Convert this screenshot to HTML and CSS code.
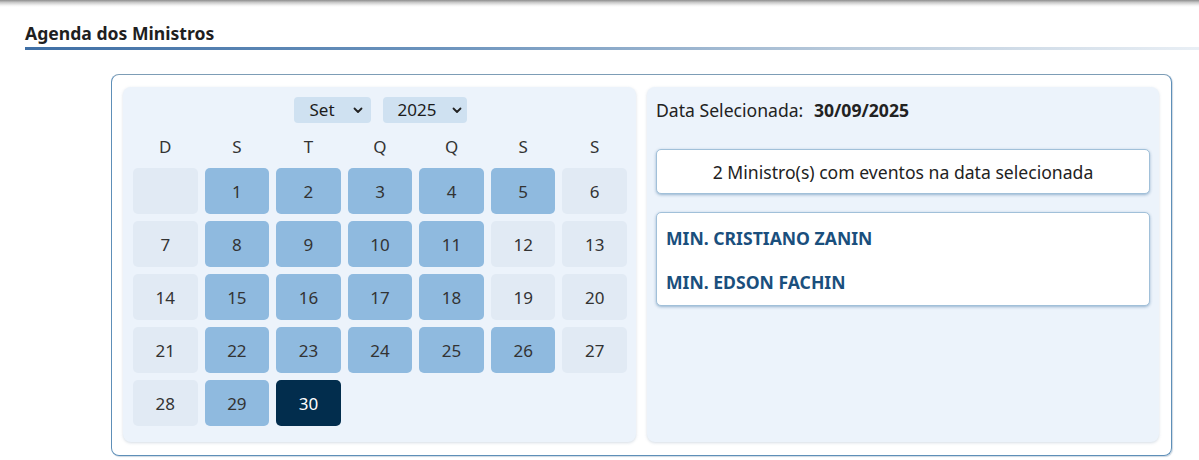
FILE: index.html
```html
<!DOCTYPE html>
<html lang="pt-BR">
<head>
<meta charset="utf-8">
<title>Agenda dos Ministros</title>
<link rel="stylesheet" href="styles.css">
</head>
<body>
<div class="topshadow"></div>
<header class="page-head">
  <h1 class="page-title">Agenda dos Ministros</h1>
</header>
<main class="agenda">
  <section class="panel calendar">
    <div class="pickers">
      <div class="picker picker-month"><span>Set</span><svg class="chev" width="10" height="7" viewBox="0 0 10 7"><path d="M1.5 1.5 L5 5 L8.5 1.5" fill="none" stroke="#222" stroke-width="1.8" stroke-linecap="round" stroke-linejoin="round"/></svg></div>
      <div class="picker picker-year"><span>2025</span><svg class="chev" width="10" height="7" viewBox="0 0 10 7"><path d="M1.5 1.5 L5 5 L8.5 1.5" fill="none" stroke="#222" stroke-width="1.8" stroke-linecap="round" stroke-linejoin="round"/></svg></div>
    </div>
    <div class="weekdays">
      <span>D</span><span>S</span><span>T</span><span>Q</span><span>Q</span><span>S</span><span>S</span>
    </div>
    <div class="days">
      <div class="day empty"></div>
      <div class="day ev">1</div>
      <div class="day ev">2</div>
      <div class="day ev">3</div>
      <div class="day ev">4</div>
      <div class="day ev">5</div>
      <div class="day">6</div>
      <div class="day">7</div>
      <div class="day ev">8</div>
      <div class="day ev">9</div>
      <div class="day ev">10</div>
      <div class="day ev">11</div>
      <div class="day">12</div>
      <div class="day">13</div>
      <div class="day">14</div>
      <div class="day ev">15</div>
      <div class="day ev">16</div>
      <div class="day ev">17</div>
      <div class="day ev">18</div>
      <div class="day">19</div>
      <div class="day">20</div>
      <div class="day">21</div>
      <div class="day ev">22</div>
      <div class="day ev">23</div>
      <div class="day ev">24</div>
      <div class="day ev">25</div>
      <div class="day ev">26</div>
      <div class="day">27</div>
      <div class="day">28</div>
      <div class="day ev">29</div>
      <div class="day sel">30</div>
    </div>
  </section>
  <section class="panel details">
    <p class="selected">Data Selecionada: <strong>30/09/2025</strong></p>
    <div class="box count">2 Ministro(s) com eventos na data selecionada</div>
    <ul class="box ministers">
      <li>MIN. CRISTIANO ZANIN</li>
      <li>MIN. EDSON FACHIN</li>
    </ul>
  </section>
</main>
</body>
</html>
```

FILE: styles.css
```css
* { box-sizing: border-box; }
html, body { margin: 0; padding: 0; background: #fff; }
body {
  font-family: "Noto Sans", "Open Sans", "DejaVu Sans", sans-serif;
  color: #222;
  width: 1199px;
  height: 460px;
  overflow: hidden;
}
.topshadow {
  height: 7px;
  background: linear-gradient(to bottom, #8d8d8d 0%, #c9c9c9 35%, #f2f2f2 75%, #ffffff 100%);
}
.page-head {
  padding: 14px 0 0 25px;
}
.page-title {
  margin: 0;
  font-size: 17.6px;
  font-weight: 700;
  line-height: 24px;
  color: #1f1f1f;
  padding-bottom: 2px;
  border-bottom: 3px solid transparent;
  border-image: linear-gradient(to right, #3f6fa5 0%, #6b93bd 35%, #b9cadb 70%, #e9eff5 100%) 1;
}
.agenda {
  margin: 24px 0 0 111px;
  width: 1061px;
  border: 1px solid #5e8fb8;
  border-top-color: #7d9db6;
  border-radius: 8px;
  padding: 12px 12px 13px 11px;
  display: flex;
  gap: 11px;
  box-shadow: 1px 1px 1px rgba(60,100,140,.25);
}
.panel {
  background: #ecf3fb;
  border-radius: 8px;
  box-shadow: 0 1px 3px rgba(90,120,150,.25);
}
.calendar {
  width: 513px;
  padding: 10px 9px 16px 10px;
}
.pickers {
  display: flex;
  justify-content: center;
  gap: 12px;
}
.picker {
  height: 26px;
  background: #cfe1f1;
  border-radius: 4px;
  display: flex;
  align-items: center;
  font-size: 17px;
  line-height: 22px;
  color: #1c1c1c;
}
.picker-month { width: 77px; padding-left: 16px; gap: 18px; }
.picker-year { width: 84px; padding-left: 15px; gap: 16px; }
.chev { display: block; margin-top: 1px; }
.weekdays {
  margin-top: 10px;
  height: 26px;
  display: grid;
  grid-template-columns: repeat(7, 1fr);
  gap: 7px;
  align-items: center;
  text-align: center;
  font-size: 17px;
  color: #333;
}
.days {
  margin-top: 9px;
  display: grid;
  grid-template-columns: repeat(7, 1fr);
  gap: 7px;
}
.day {
  height: 46px;
  border-radius: 5px;
  background: #e1eaf4;
  display: flex;
  align-items: center;
  justify-content: center;
  font-size: 17px;
  color: #333;
}
.day.ev { background: #8fbadf; }
.day.sel { background: #022d4d; color: #fff; }
.details {
  width: 512px;
  padding: 11px 9px 9px 9px;
}
.selected {
  margin: 0;
  font-size: 17.6px;
  line-height: 24px;
  color: #222;
}
.selected strong { margin-left: 6px; font-weight: 700; }
.box {
  background: #fff;
  border: 1px solid #a1c0d9;
  border-radius: 5px;
  box-shadow: 0 1px 3px rgba(45,100,150,.45);
}
.count {
  margin-top: 27px;
  height: 45px;
  display: flex;
  align-items: center;
  justify-content: center;
  font-size: 17.6px;
  color: #222;
}
.ministers {
  list-style: none;
  margin: 18px 0 0;
  padding: 13px 9px 11px;
  display: flex;
  flex-direction: column;
  gap: 20px;
}
.ministers li {
  font-size: 17.6px;
  line-height: 24px;
  font-weight: 700;
  color: #1a4f7d;
}
```
